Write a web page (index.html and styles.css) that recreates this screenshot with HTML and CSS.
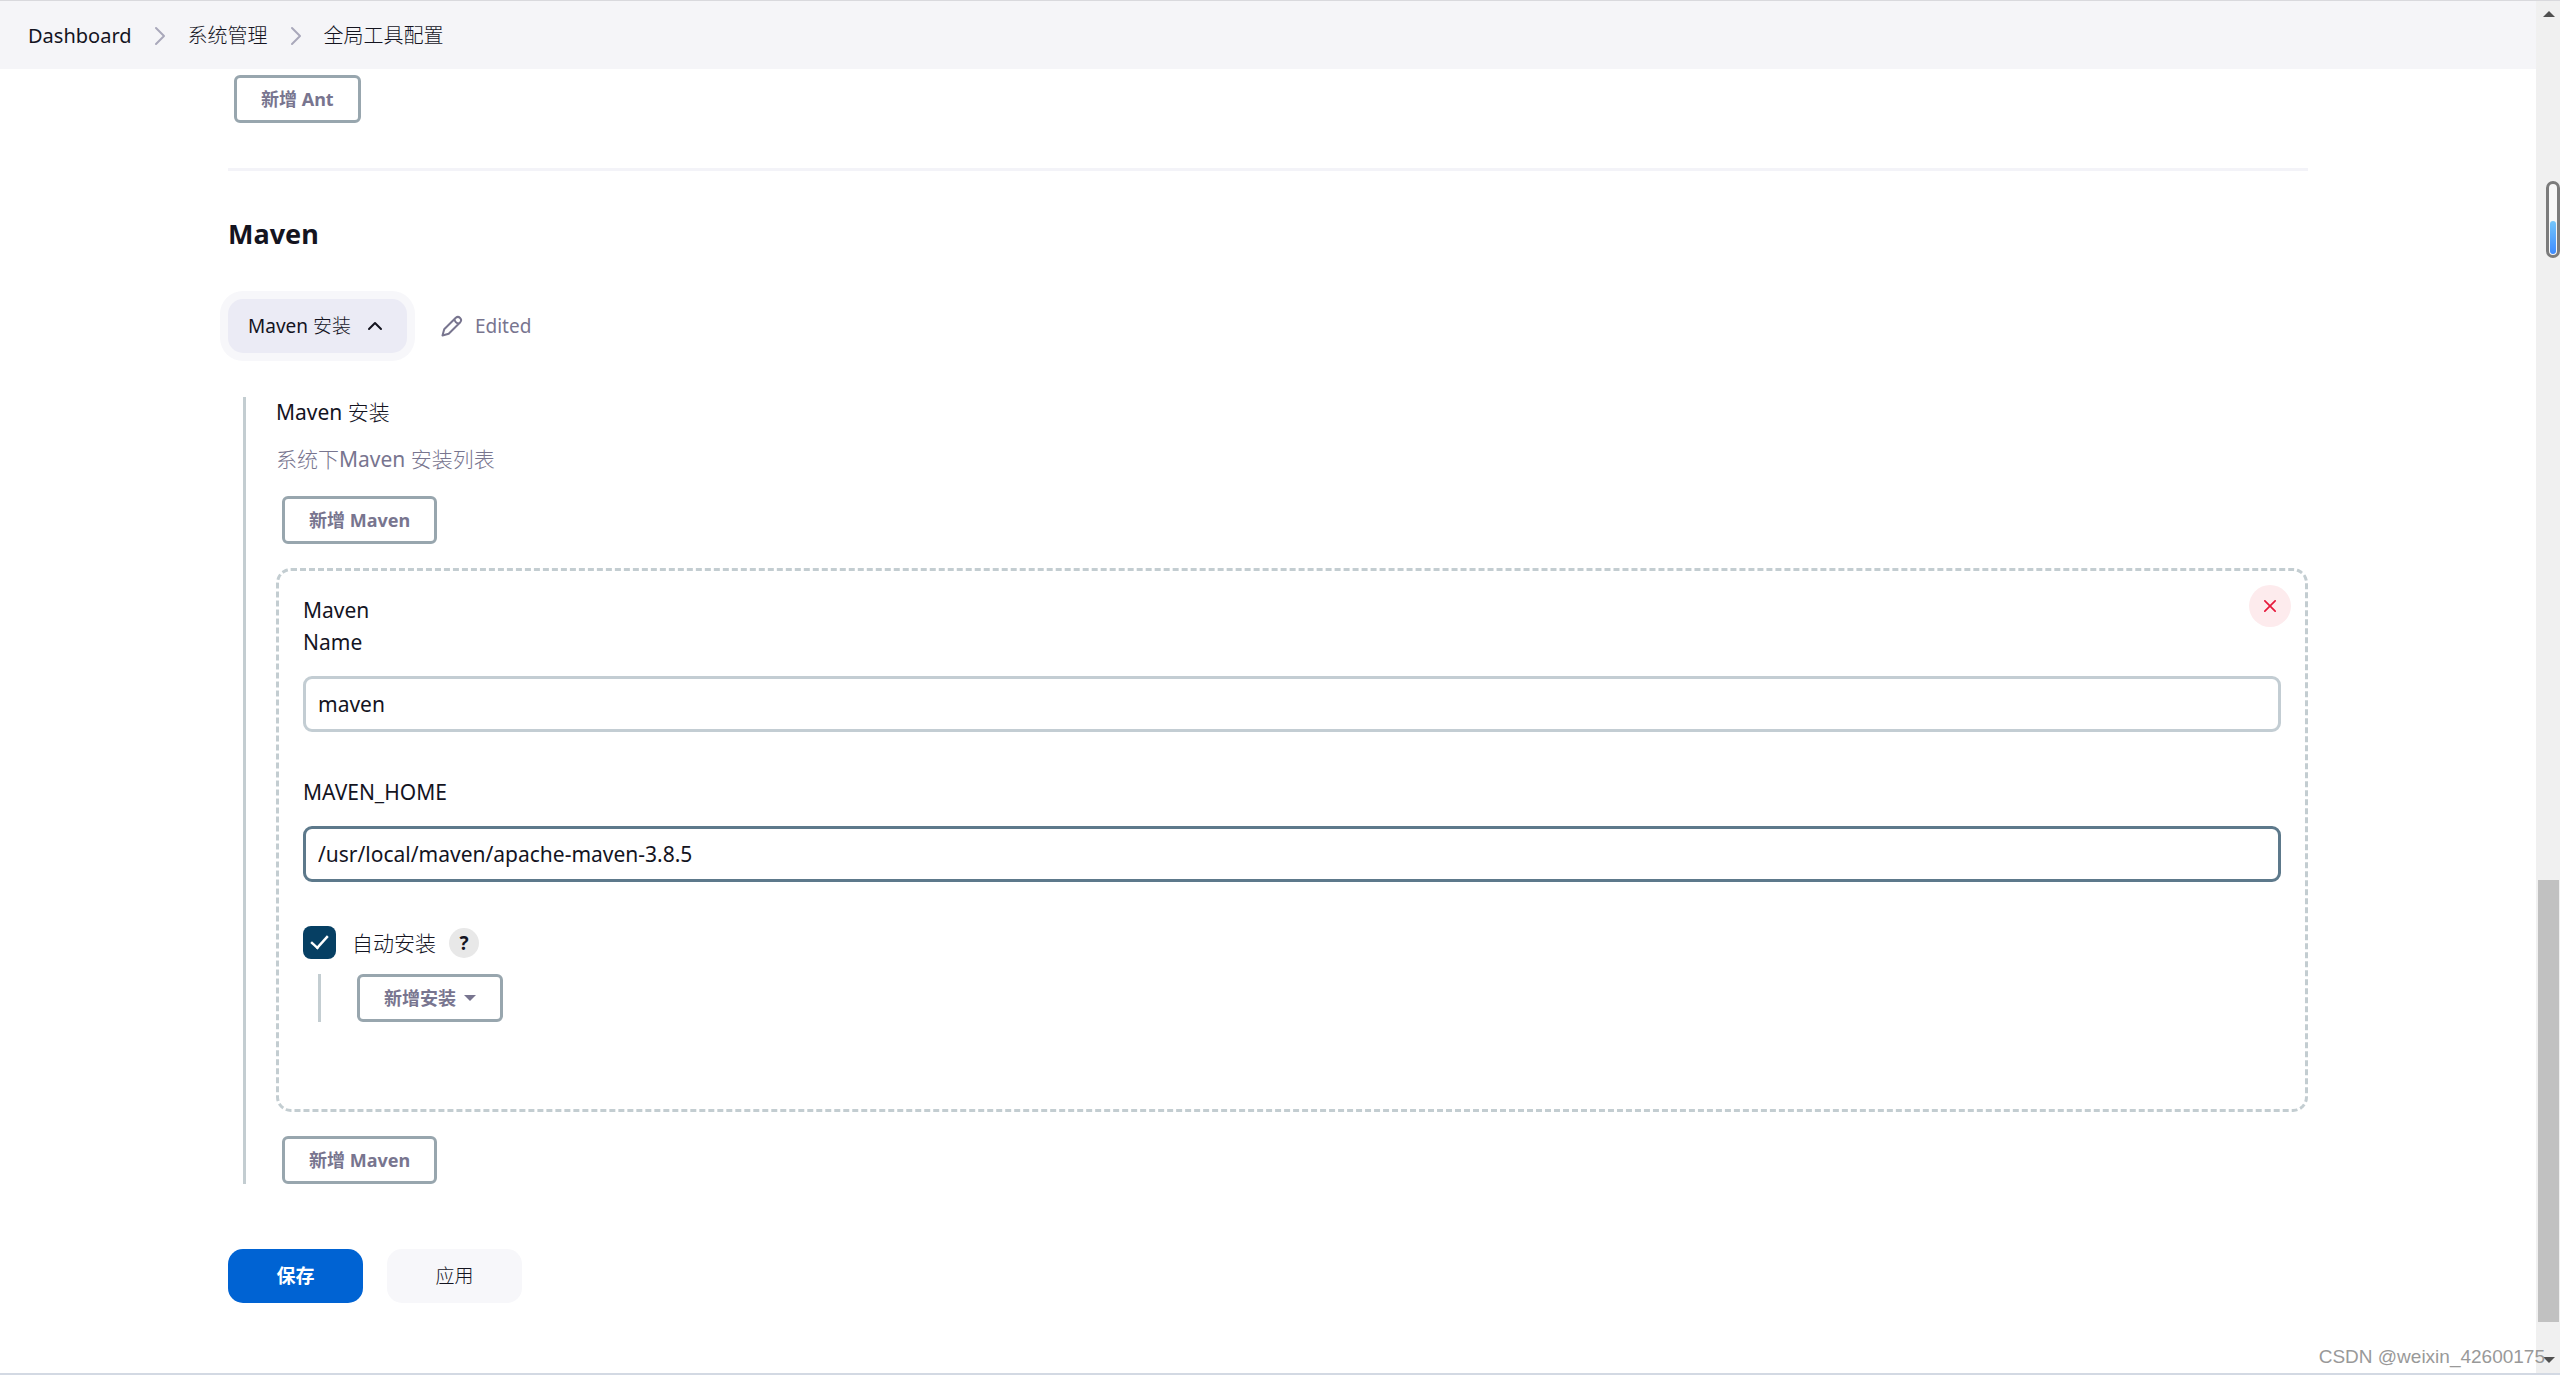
FILE: index.html
```html
<!DOCTYPE html>
<html lang="zh-CN">
<head>
<meta charset="utf-8">
<title>全局工具配置</title>
<link rel="stylesheet" href="styles.css">
</head>
<body>
<div class="page">
  <header class="header">
    <nav class="breadcrumbs" aria-label="Breadcrumb">
      <a href="#">Dashboard</a>
      <svg class="crumb-sep" viewBox="0 0 12 20"><path d="M2 2l8 8-8 8"/></svg>
      <a href="#">系统管理</a>
      <svg class="crumb-sep" viewBox="0 0 12 20"><path d="M2 2l8 8-8 8"/></svg>
      <a href="#">全局工具配置</a>
    </nav>
  </header>
  <main class="content">
    <button type="button" class="btn-outline">新增 Ant</button>
    <hr class="divider">
    <h2 class="section-title">Maven</h2>
    <div class="toggle-row">
      <button type="button" class="btn-toggle" aria-expanded="true">Maven 安装
        <svg class="chevron" viewBox="0 0 16 10"><path d="M2 8l6-6 6 6"/></svg>
      </button>
      <span class="edited">
        <svg class="pencil" viewBox="0 0 22 22"><path d="M1.500 20.500l1.700-6.200L14.800 2.700a3.200 3.200 0 0 1 4.500 4.500L7.700 18.800zM13.500 4c.2 2.600 1.900 4.300 4.500 4.500"/></svg>
        Edited
      </span>
    </div>
    <section class="installations">
      <h3 class="label">Maven 安装</h3>
      <p class="description">系统下Maven 安装列表</p>
      <button type="button" class="btn-outline">新增 Maven</button>
      <div class="card">
        <button type="button" class="btn-delete" aria-label="删除">
          <svg viewBox="0 0 14 14"><path d="M1 1l12 12M13 1L1 13"/></svg>
        </button>
        <div class="label">Maven</div>
        <label class="label" for="name">Name</label>
        <input class="text-input" id="name" type="text" value="maven">
        <label class="label label-next" for="home">MAVEN_HOME</label>
        <input class="text-input text-input-active" id="home" type="text" value="/usr/local/maven/apache-maven-3.8.5">
        <div class="check-row">
          <input class="checkbox" id="auto" type="checkbox" checked>
          <label class="check-label" for="auto">自动安装</label>
          <button type="button" class="btn-help">?</button>
        </div>
        <div class="nested">
          <button type="button" class="btn-outline btn-menu">新增安装<span class="caret"></span></button>
        </div>
      </div>
      <button type="button" class="btn-outline">新增 Maven</button>
    </section>
    <div class="actions">
      <button type="submit" class="btn btn-primary">保存</button>
      <button type="button" class="btn">应用</button>
    </div>
  </main>
  <div class="scrollbar" aria-hidden="true">
    <span class="arrow arrow-up"></span>
    <span class="track-before"></span>
    <span class="thumb"></span>
    <span class="track-after"></span>
    <span class="arrow arrow-down"></span>
  </div>
  <div class="gauge"><span class="gauge-fill"></span></div>
  <div class="watermark">CSDN @weixin_42600175</div>
</div>
</body>
</html>
```
FILE: styles.css
```css
* {
  box-sizing: border-box;
}

body {
  margin: 0;
  background: #fff;
  color: #14141f;
  font-family: "Noto Sans", "Noto Sans CJK SC Light", "Noto Sans CJK SC", sans-serif;
  font-size: 21px;
  line-height: 32px;
}

button,
input {
  font: inherit;
  color: inherit;
  margin: 0;
}

svg {
  display: block;
  fill: none;
  stroke: currentColor;
  stroke-width: 2;
  stroke-linecap: round;
  stroke-linejoin: round;
}

.page {
  position: relative;
  display: grid;
  grid-template-columns: minmax(0, 1fr) 24px;
  grid-template-rows: auto 1fr;
  min-height: 100vh;
  border-top: 1px solid #d9d9dd;
  border-bottom: 2px solid #d3d9e3;
}

.header {
  padding: 19px 28px 17px;
  background: #f5f5f8;
}

.breadcrumbs {
  display: flex;
  align-items: center;
  font-size: 20px;
}

.breadcrumbs a {
  color: inherit;
  text-decoration: none;
}

.crumb-sep {
  width: 12px;
  height: 20px;
  margin: 0 22px;
  color: #a9a8bb;
}

.content {
  display: flex;
  flex-direction: column;
  align-items: stretch;
  padding: 6px 228px 69px;
}

.btn-outline {
  align-self: flex-start;
  height: 48px;
  margin-left: 6px;
  padding: 0 24px;
  border: 3px solid #98a6ae;
  border-radius: 6px;
  background: #fff;
  color: #78758f;
  font-family: "Noto Sans", "Noto Sans CJK SC", sans-serif;
  font-size: 18px;
  font-weight: 700;
  line-height: 24px;
}

.divider {
  width: 100%;
  height: 3px;
  margin: 45px 0;
  border: 0;
  background: #f3f3f8;
}

.section-title {
  margin: 0;
  font-size: 27px;
  font-weight: 700;
  line-height: 36px;
}

.toggle-row {
  display: flex;
  align-items: center;
  gap: 34px;
  margin-top: 47px;
  font-size: 19px;
}

.btn-toggle {
  display: flex;
  align-items: center;
  gap: 16px;
  height: 54px;
  padding: 0 24px 0 20px;
  border: 0;
  border-radius: 15px;
  background: #ebebf5;
  box-shadow: 0 0 0 8px #f7f7fa;
}

.chevron {
  width: 16px;
  height: 10px;
}

.edited {
  display: flex;
  align-items: center;
  gap: 12px;
  color: #78758f;
}

.pencil {
  width: 22px;
  height: 22px;
}

.installations {
  display: flex;
  flex-direction: column;
  margin: 44px 0 0 15px;
  padding-left: 30px;
  border-left: 3px solid #c3cdd1;
}

.label {
  margin: 0;
  font-size: 21px;
  font-weight: 400;
  line-height: 32px;
}

.installations > .label {
  line-height: 30px;
}

.description {
  margin: 16px 0 21px;
  color: #78758f;
}

.card {
  position: relative;
  display: flex;
  flex-direction: column;
  margin: 24px 0;
  padding: 23px 24px 87px;
  border: 3px dashed #c3cdd1;
  border-radius: 15px;
}

.btn-delete {
  position: absolute;
  top: 14px;
  right: 14px;
  display: grid;
  place-items: center;
  width: 42px;
  height: 42px;
  padding: 0;
  border: 0;
  border-radius: 50%;
  background: #fdebed;
  color: #e6193c;
}

.btn-delete svg {
  width: 12px;
  height: 12px;
}

.text-input {
  width: 100%;
  height: 56px;
  margin-top: 18px;
  padding: 0 12px;
  border: 3px solid #c3cdd3;
  border-radius: 9px;
  background: #fff;
}

.text-input-active {
  border-color: #5d798b;
}

.label-next {
  margin-top: 44px;
}

.check-row {
  display: flex;
  align-items: center;
  margin-top: 44px;
}

.checkbox {
  appearance: none;
  display: grid;
  place-items: center;
  width: 33px;
  height: 33px;
  border-radius: 8px;
  background: #063f63;
}

.checkbox:checked::before {
  content: "";
  width: 18px;
  height: 9px;
  margin-bottom: 5px;
  border: solid #fff;
  border-width: 0 0 3px 3px;
  transform: rotate(-48deg) scale(0.8);
}

.check-label {
  margin-left: 16px;
}

.btn-help {
  width: 30px;
  height: 30px;
  margin-left: 13px;
  padding: 0;
  border: 0;
  border-radius: 50%;
  background: #e8e8e8;
  font-size: 19px;
  font-weight: 700;
  line-height: 30px;
}

.nested {
  display: flex;
  margin: 15px 0 0 15px;
  padding-left: 30px;
  border-left: 3px solid #c3cdd1;
}

.btn-menu {
  display: flex;
  align-items: center;
  gap: 8px;
}

.caret {
  border: 6px solid transparent;
  border-top-color: currentColor;
  border-bottom: 0;
}

.actions {
  display: flex;
  gap: 24px;
  margin-top: 65px;
}

.btn {
  width: 135px;
  height: 54px;
  padding: 0;
  border: 0;
  border-radius: 15px;
  background: #f7f7fa;
  font-size: 19px;
}

.btn-primary {
  background: #0063d3;
  color: #fff;
  font-family: "Noto Sans", "Noto Sans CJK SC", sans-serif;
  font-weight: 700;
}

.scrollbar {
  grid-column: 2;
  grid-row: 1 / 3;
  display: flex;
  flex-direction: column;
  padding: 10px 1px 10px 2px;
  background: #f0f0f0;
}

.arrow {
  align-self: center;
  border: 6px solid transparent;
}

.arrow-up {
  border-top: 0;
  border-bottom-color: #505050;
}

.arrow-down {
  border-bottom: 0;
  border-top-color: #505050;
}

.track-before {
  flex: 864;
}

.thumb {
  flex: 442;
  background: #c1c1c1;
}

.track-after {
  flex: 35;
}

.gauge {
  position: absolute;
  top: 180px;
  right: 0;
  display: flex;
  align-items: flex-end;
  width: 14px;
  height: 77px;
  padding: 1px;
  border: 3px solid #7b7b7b;
  border-radius: 7px;
  background: #f7f7f7;
}

.gauge-fill {
  width: 100%;
  height: 33px;
  border-radius: 3px;
  background: linear-gradient(#74c6fb, #3d8bff);
}

.watermark {
  position: absolute;
  right: 15px;
  bottom: 0;
  color: #999;
  font-family: "Liberation Sans", sans-serif;
  font-size: 19px;
}
```
